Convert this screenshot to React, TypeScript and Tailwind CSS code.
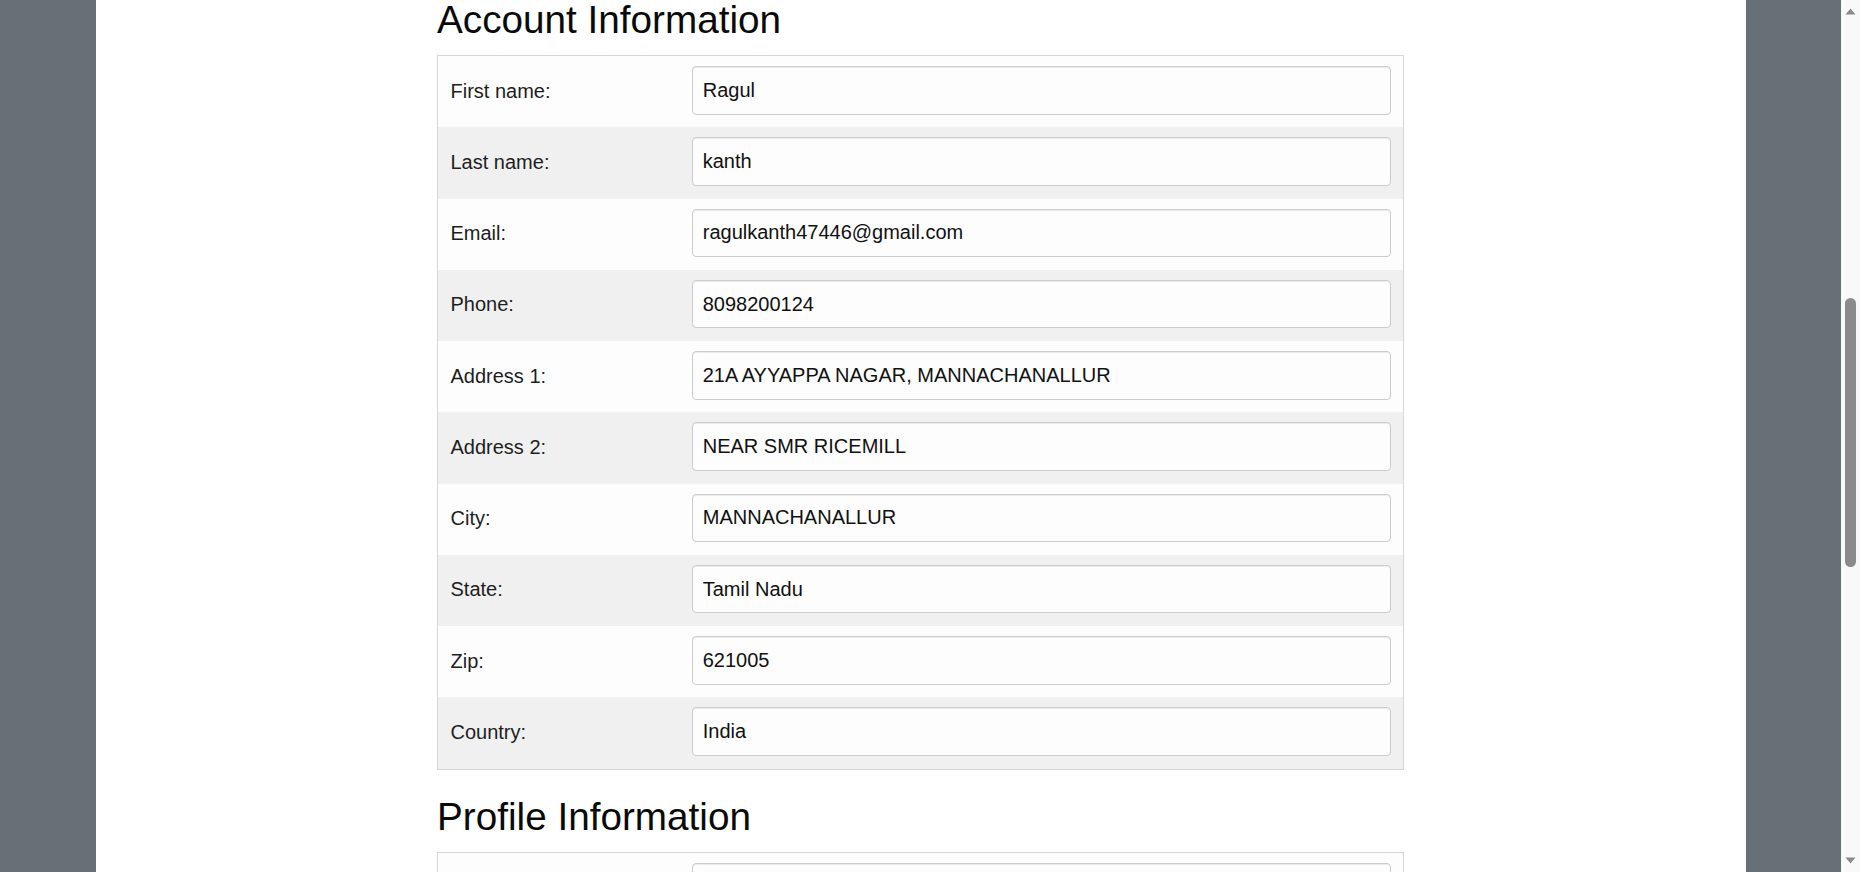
const accountRows = [
  { label: 'First name:', value: 'Ragul' },
  { label: 'Last name:', value: 'kanth' },
  { label: 'Email:', value: 'ragulkanth47446@gmail.com' },
  { label: 'Phone:', value: '8098200124' },
  { label: 'Address 1:', value: '21A AYYAPPA NAGAR, MANNACHANALLUR' },
  { label: 'Address 2:', value: 'NEAR SMR RICEMILL' },
  { label: 'City:', value: 'MANNACHANALLUR' },
  { label: 'State:', value: 'Tamil Nadu' },
  { label: 'Zip:', value: '621005' },
  { label: 'Country:', value: 'India' },
];

const profileRows = [{ label: '', value: '' }];

const Row = (props: { label: string; value: string; odd: boolean }) => {
  return (
    <div
      className={
        'flex h-[71.25px] ' + (props.odd ? 'bg-[#f0f0f0]' : 'bg-[#fdfdfd]')
      }
    >
      <div className="w-[241.25px] shrink-0 px-[12.5px] pb-[2px] flex items-center text-[20px] text-[#1e1e1e]">
        {props.label}
      </div>
      <div className="flex-1 px-[12.5px] pt-[10px]">
        <input
          readOnly
          defaultValue={props.value}
          className="w-full h-[48.5px] px-[10px] border border-[#cccccc] rounded-[4px] bg-[#fdfdfd] shadow-[inset_0_1px_1px_rgba(0,0,0,0.075)] text-[20px] text-[#111111] outline-none"
        />
      </div>
    </div>
  );
};

const Section = (props: {
  title: string;
  rows: { label: string; value: string }[];
  className?: string;
}) => {
  return (
    <>
      <h2
        className={
          'text-[38.7px] leading-[40px] font-normal text-[#0a0a0a] mb-[15px] ' +
          (props.className ?? '')
        }
      >
        {props.title}
      </h2>
      <div className="border border-[#d6d6d6]">
        {props.rows.map((row, i) => (
          <Row key={i} label={row.label} value={row.value} odd={i % 2 == 1} />
        ))}
      </div>
    </>
  );
};

const Scrollbar = () => {
  return (
    <div className="w-[19px] shrink-0 bg-[#f9f9f9] flex flex-col items-center">
      <svg width="11" height="7" viewBox="0 0 11 7" className="mt-[8px]">
        <path d="M5.5 0.5 L10.5 6.5 L0.5 6.5 Z" fill="#8a8a8a" />
      </svg>
      <div className="mt-[283px] w-[11px] h-[269px] rounded-full bg-[#8b8b8b]" />
      <div className="flex-1" />
      <svg width="11" height="7" viewBox="0 0 11 7" className="mb-[8px]">
        <path d="M0.5 0.5 L10.5 0.5 L5.5 6.5 Z" fill="#8a8a8a" />
      </svg>
    </div>
  );
};

export default function App() {
  return (
    <div
      className="flex h-[872px] w-full overflow-hidden bg-[#677077]"
      style={{ fontFamily: '"Liberation Sans", Arial, sans-serif' }}
    >
      <div className="w-[96px] shrink-0" />
      <div className="w-[1650px] shrink-0 bg-white pl-[341px]">
        <div className="w-[967px]">
          <Section title="Account Information" rows={accountRows} />
          <Section
            title="Profile Information"
            rows={profileRows}
            className="mt-[27px]"
          />
        </div>
      </div>
      <div className="flex-1" />
      <Scrollbar />
    </div>
  );
}
